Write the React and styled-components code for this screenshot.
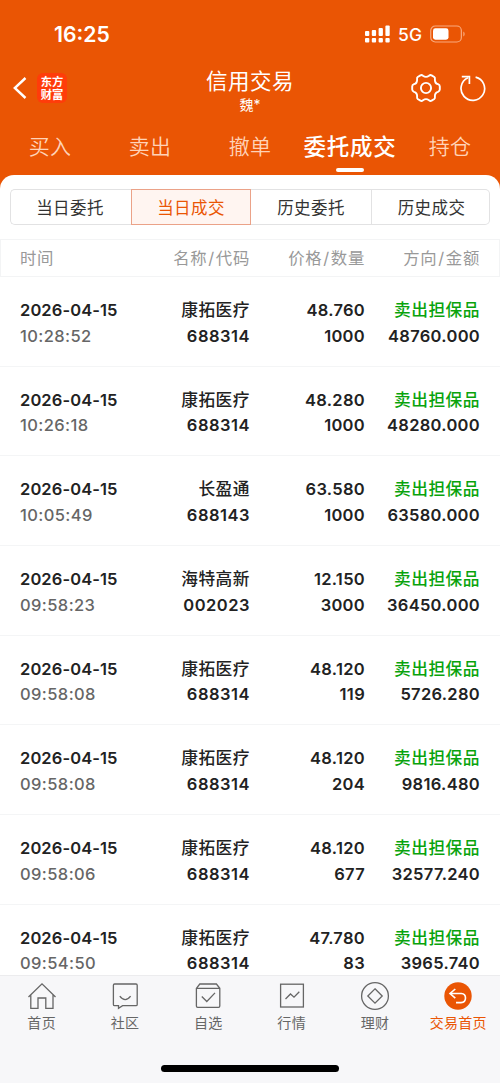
import React from "react";
import styled, { createGlobalStyle } from "styled-components";

const Global = createGlobalStyle`
  * { box-sizing: border-box; }
  body {
    margin: 0;
    background: #fff;
    font-family: Inter, "Noto Sans CJK SC", sans-serif;
    -webkit-font-smoothing: antialiased;
  }
`;

const Screen = styled.div`
  width: 500px;
  height: 1083px;
  display: flex;
  flex-direction: column;
  overflow: hidden;
  background: #fff;
`;

const Header = styled.header`
  flex: none;
  height: 189px;
  background: #ea5504;
  color: #fff;
  display: flex;
  flex-direction: column;
`;

const StatusBar = styled.div`
  height: 64px;
  padding: 4px 34px 0 54px;
  display: flex;
  align-items: center;
  justify-content: space-between;
`;

const Clock = styled.span`
  font-size: 21.2px;
  font-weight: 600;
  line-height: 26px;
`;

const StatusIcons = styled.div`
  display: flex;
  align-items: center;
`;

const Network = styled.span`
  font-size: 17.5px;
  font-weight: 500;
  line-height: 20px;
  margin: 1px 8px 0 8px;
`;

const NavBar = styled.div`
  height: 58px;
  padding: 0 14px 0 12px;
  display: grid;
  grid-template-columns: 90px 1fr 88px;
  align-items: start;
`;

const NavLeft = styled.div`
  display: flex;
  align-items: center;
  gap: 9px;
  padding-top: 9px;
`;

const Brand = styled.div`
  width: 30px;
  height: 30px;
  border-radius: 6px;
  background: #ff3c0a;
  display: flex;
  flex-direction: column;
  align-items: center;
  justify-content: center;
  font-family: "Noto Sans CJK SC", sans-serif;
  font-size: 11.3px;
  line-height: 13px;
  font-weight: 700;
`;

const BrandLine = styled.div`
  height: 13px;
`;

const Heading = styled.div`
  text-align: center;
  padding-top: 4px;
`;

const Title = styled.div`
  font-size: 21.5px;
  line-height: 27px;
  letter-spacing: 0.5px;
`;

const Account = styled.div`
  font-size: 14px;
  line-height: 20px;
`;

const NavRight = styled.div`
  display: flex;
  align-items: center;
  justify-content: flex-end;
  gap: 19px;
  padding-top: 9px;
`;

const Tabs = styled.nav`
  height: 53px;
  display: grid;
  grid-template-columns: repeat(5, 100px);
`;

const Tab = styled.div`
  display: flex;
  flex-direction: column;
  align-items: center;
  white-space: nowrap;
  padding-top: 10px;
  font-size: ${(p) => (p.$active ? "22.5px" : "21px")};
  line-height: 30px;
  letter-spacing: ${(p) => (p.$active ? "0.7px" : "0.3px")};
  font-weight: ${(p) => (p.$active ? 500 : 350)};
  color: ${(p) => (p.$active ? "#fff" : "#ffd3b8")};
`;

const TabMark = styled.span`
  width: 28px;
  height: 4px;
  border-radius: 2px;
  background: #fff;
  margin-top: 6px;
`;

const Panel = styled.main`
  flex: 1;
  min-height: 0;
  margin-top: -14px;
  background: #fff;
  border-radius: 14px 14px 0 0;
  overflow: hidden;
  display: flex;
  flex-direction: column;
`;

const Segments = styled.div`
  flex: none;
  height: 36px;
  margin: 14px 10px;
  display: grid;
  grid-template-columns: 121px 120px 121px 118px;
`;

const Segment = styled.div`
  border: 1px solid ${(p) => (p.$active ? "#eba288" : "#e2e2e3")};
  border-left-width: ${(p) => (p.$first || p.$active ? "1px" : "0")};
  border-right-width: ${(p) => (p.$beforeActive ? "0" : "1px")};
  border-radius: ${(p) => (p.$first ? "5px 0 0 5px" : p.$last ? "0 5px 5px 0" : "0")};
  background: ${(p) => (p.$active ? "#fff5f1" : "#fff")};
  color: ${(p) => (p.$active ? "#ea5504" : "#333")};
  font-size: 16.5px;
  letter-spacing: 0.4px;
  padding-right: ${(p) => (p.$first ? "2px" : "0")};
  padding-left: ${(p) => (p.$last ? "2px" : "0")};
  display: flex;
  align-items: center;
  justify-content: center;
`;

const Columns = styled.div`
  flex: none;
  display: grid;
  grid-template-columns: repeat(4, 115px);
  text-align: right;
  white-space: nowrap;
  padding: 0 19px;
  > :first-child { text-align: left; }
`;

const TableHead = styled(Columns)`
  height: 38px;
  border: 1px solid #f3f4f5;
  align-items: center;
  color: #999;
  font-size: 16.4px;
  line-height: 24px;
  letter-spacing: 0.7px;
  padding-bottom: 1px;
`;

const Slash = styled.span`
  margin: 0 1px 0 0.8px;
`;

const List = styled.div`
  flex: 1;
  min-height: 0;
  overflow: hidden;
`;

const Row = styled(Columns)`
  height: 89.7px;
  padding: 21px 20px 0;
  border-bottom: 1px solid #f4f5f6;
  color: #222;
  font-size: 16.5px;
  font-weight: 600;
  line-height: 25.6px;
  letter-spacing: 0.3px;
`;

const Cell = styled.div`
  display: flex;
  flex-direction: column;
`;

const Line = styled.span`
  height: 25.6px;
  color: ${(p) => p.$color || "inherit"};
`;

const DateLine = styled(Line)`
  letter-spacing: 0.1px;
`;

const TimeLine = styled(Line)`
  color: #666;
  font-weight: 500;
  letter-spacing: 0.4px;
`;

const NameLine = styled(Line)`
  font-size: 16.7px;
  font-weight: 500;
  letter-spacing: 0.5px;
`;

const CodeLine = styled(Line)`
  letter-spacing: 0.5px;
`;

const BottomBar = styled.footer`
  flex: none;
  height: 108px;
  background: #f7f7f9;
  border-top: 1px solid #ececee;
  display: flex;
  flex-direction: column;
  align-items: center;
  justify-content: space-between;
  padding-bottom: 11px;
`;

const BottomItems = styled.div`
  width: 500px;
  display: grid;
  grid-template-columns: repeat(6, 1fr);
`;

const BottomItem = styled.div`
  display: flex;
  flex-direction: column;
  align-items: center;
  padding-top: 5px;
  color: ${(p) => (p.$active ? "#ea5504" : "#666")};
  font-size: 14px;
  line-height: 20px;
  letter-spacing: 0.3px;
  svg { margin-bottom: 2px; }
`;

const HomeIndicator = styled.div`
  width: 178px;
  height: 7px;
  border-radius: 4px;
  background: #000;
`;

const Signal = () => (
  <svg width="25" height="18" viewBox="0 0 25 18" fill="#fff">
    <rect x="0" y="6" width="4.3" height="5" rx="1" />
    <rect x="6.8" y="5" width="4.3" height="6" rx="1" />
    <rect x="13.6" y="3" width="4.3" height="8" rx="1" />
    <rect x="20.4" y="0.5" width="4.3" height="10.5" rx="1" />
    <rect x="0" y="13" width="4.3" height="4.5" rx="1" />
    <rect x="6.8" y="13" width="4.3" height="4.5" rx="1" />
    <rect x="13.6" y="13" width="4.3" height="4.5" rx="1" />
    <rect x="20.4" y="13" width="4.3" height="4.5" rx="1" />
  </svg>
);

const Battery = () => (
  <svg width="36" height="18" viewBox="0 0 36 18">
    <rect x="0.75" y="1" width="30.6" height="16" rx="4.5" fill="none" stroke="#f9aa7e" strokeWidth="1.2" />
    <rect x="3" y="3.3" width="15.5" height="11.4" rx="2.4" fill="#fff" />
    <path d="M33.3 6.5c1.8.7 1.8 4.3 0 5z" fill="#f9aa7e" />
  </svg>
);

const Back = () => (
  <svg width="16" height="24" viewBox="0 0 16 24" fill="none" stroke="#fff" strokeWidth="2.4">
    <path d="M13.5 2 2.8 12l10.7 10" />
  </svg>
);

const Gear = () => (
  <svg width="30" height="30" viewBox="0 0 30 30" fill="none" stroke="#fff" strokeWidth="1.9" strokeLinejoin="round">
    <path d="M9.4 2.4Q10.5 1.5 12 2.8Q15 5 18 2.8Q19.5 1.5 20.6 2.4L23.3 4Q24.2 4.7 23.9 6.2Q23.6 10.2 27 11.2Q28.8 11.9 28.8 13.4V16.6Q28.8 18.1 27 18.8Q23.6 19.8 23.9 23.8Q24.2 25.3 23.3 26L20.6 27.6Q19.5 28.5 18 27.2Q15 25 12 27.2Q10.5 28.5 9.4 27.6L6.7 26Q5.8 25.3 6.1 23.8Q6.4 19.8 3 18.8Q1.2 18.1 1.2 16.6V13.4Q1.2 11.9 3 11.2Q6.4 10.2 6.1 6.2Q5.8 4.7 6.7 4Z" />
    <circle cx="15" cy="15" r="5.1" />
  </svg>
);

const Refresh = () => (
  <svg width="26" height="28" viewBox="0 0 26 28" fill="none" stroke="#fff" strokeWidth="1.7">
    <path d="M15.6 3.1A11.8 11.8 0 1 1 8 3.8" />
    <path d="M1.8 2.6H9.4V10" />
  </svg>
);

const Icon = ({ children }) => (
  <svg width="30" height="30" viewBox="0 0 30 30" fill="none" stroke="#666" strokeWidth="1.3">
    {children}
  </svg>
);

const icons = {
  home: (
    <Icon>
      <path d="M1.5 16 15 2.8 28.5 16M3.8 14V27.3H11V17H18.8V27.3H26V14" />
    </Icon>
  ),
  chat: (
    <Icon>
      <path d="M4.6 3H26Q27.2 3 27.2 4.2V23.4Q27.2 24.6 26 24.6H12.6L8.5 27.3V24.6H4.6Q3.4 24.6 3.4 23.4V4.2Q3.4 3 4.6 3Z" />
      <path d="M9.8 15.2Q15.2 22.2 20.6 15.2" />
    </Icon>
  ),
  box: (
    <Icon>
      <path d="M3.4 7.3 6.8 3H23.4L26.8 7.3V25Q26.8 26.3 25.5 26.3H4.7Q3.4 26.3 3.4 25ZM3.4 7.3H26.8" />
      <path d="m8.8 15.5 5 5 8.2-8.6" />
    </Icon>
  ),
  chart: (
    <Icon>
      <rect x="3.6" y="3.2" width="22.8" height="22.8" />
      <path d="m8.5 18 5-5 3.5 3.2 5.3-5.5" />
    </Icon>
  ),
  wealth: (
    <Icon>
      <circle cx="15" cy="15" r="13.4" />
      <path d="m15 7.8 7.2 7.2-7.2 7.2L7.8 15Z" />
    </Icon>
  ),
  trade: (
    <svg width="30" height="30" viewBox="0 0 30 30" fill="none" stroke="#fff" strokeWidth="1.6">
      <circle cx="15" cy="15" r="13.7" fill="#ea5504" stroke="none" />
      <path d="M12.3 8 7 12.5l5.3 4.6M7.4 12.5H18.3Q22.5 12.8 22.5 17Q22.5 21.4 18 21.6H13" />
    </svg>
  ),
};

const headings = [
  ["名称", "代码"],
  ["价格", "数量"],
  ["方向", "金额"],
];

const trades = [
  ["10:28:52", "康拓医疗", "688314", "48.760", "1000", "48760.000"],
  ["10:26:18", "康拓医疗", "688314", "48.280", "1000", "48280.000"],
  ["10:05:49", "长盈通", "688143", "63.580", "1000", "63580.000"],
  ["09:58:23", "海特高新", "002023", "12.150", "3000", "36450.000"],
  ["09:58:08", "康拓医疗", "688314", "48.120", "119", "5726.280"],
  ["09:58:08", "康拓医疗", "688314", "48.120", "204", "9816.480"],
  ["09:58:06", "康拓医疗", "688314", "48.120", "677", "32577.240"],
  ["09:54:50", "康拓医疗", "688314", "47.780", "83", "3965.740"],
];

const menu = [
  ["首页", "home"],
  ["社区", "chat"],
  ["自选", "box"],
  ["行情", "chart"],
  ["理财", "wealth"],
  ["交易首页", "trade"],
];

export default function App() {
  return (
    <Screen>
      <Global />
      <Header>
        <StatusBar>
          <Clock>16:25</Clock>
          <StatusIcons>
            <Signal />
            <Network>5G</Network>
            <Battery />
          </StatusIcons>
        </StatusBar>
        <NavBar>
          <NavLeft>
            <Back />
            <Brand>
              <BrandLine>东方</BrandLine>
              <BrandLine>财富</BrandLine>
            </Brand>
          </NavLeft>
          <Heading>
            <Title>信用交易</Title>
            <Account>魏*</Account>
          </Heading>
          <NavRight>
            <Gear />
            <Refresh />
          </NavRight>
        </NavBar>
        <Tabs>
          {["买入", "卖出", "撤单", "委托成交", "持仓"].map((t, i) => (
            <Tab key={t} $active={i === 3}>
              {t}
              {i === 3 && <TabMark />}
            </Tab>
          ))}
        </Tabs>
      </Header>
      <Panel>
        <Segments>
          {["当日委托", "当日成交", "历史委托", "历史成交"].map((t, i) => (
            <Segment key={t} $first={i === 0} $beforeActive={i === 0} $active={i === 1} $last={i === 3}>
              {t}
            </Segment>
          ))}
        </Segments>
        <TableHead>
          <span>时间</span>
          {headings.map(([top, bottom]) => (
            <span key={top}>
              {top}
              <Slash>/</Slash>
              {bottom}
            </span>
          ))}
        </TableHead>
        <List>
          {trades.map(([time, name, code, price, count, amount], i) => (
            <Row key={i}>
              <Cell>
                <DateLine>2026-04-15</DateLine>
                <TimeLine>{time}</TimeLine>
              </Cell>
              <Cell>
                <NameLine>{name}</NameLine>
                <CodeLine>{code}</CodeLine>
              </Cell>
              <Cell>
                <Line>{price}</Line>
                <Line>{count}</Line>
              </Cell>
              <Cell>
                <NameLine $color="#09a30c">卖出担保品</NameLine>
                <Line>{amount}</Line>
              </Cell>
            </Row>
          ))}
        </List>
      </Panel>
      <BottomBar>
        <BottomItems>
          {menu.map(([label, icon]) => (
            <BottomItem key={label} $active={icon === "trade"}>
              {icons[icon]}
              {label}
            </BottomItem>
          ))}
        </BottomItems>
        <HomeIndicator />
      </BottomBar>
    </Screen>
  );
}
